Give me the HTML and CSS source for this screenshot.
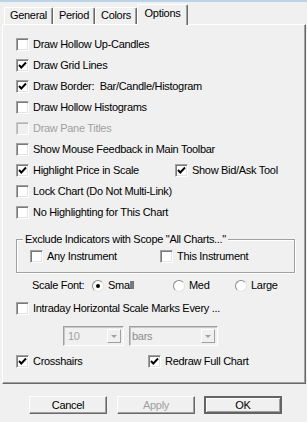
FILE: index.html
```html
<!DOCTYPE html>
<html>
<head>
    <title>Chart Options</title>
    <link rel="stylesheet" href="styles.css">
</head>
<body>
    <div class="topline"></div>
    <div class="tabs">
        <div class="tab tab-general">General</div>
        <div class="tab tab-period">Period</div>
        <div class="tab tab-colors">Colors</div>
        <div class="tab tab-options active">Options</div>
    </div>
    <div class="panel">
        <div class="row"><span class="cb"></span><span>Draw Hollow Up-Candles</span></div>
        <div class="row"><span class="cb checked"><svg viewBox="0 0 11 11"><polyline points="2,5 4.3,7.5 9,2.5"/></svg></span><span>Draw Grid Lines</span></div>
        <div class="row"><span class="cb checked"><svg viewBox="0 0 11 11"><polyline points="2,5 4.3,7.5 9,2.5"/></svg></span><span>Draw Border:&nbsp; Bar/Candle/Histogram</span></div>
        <div class="row"><span class="cb"></span><span>Draw Hollow Histograms</span></div>
        <div class="row disabled"><span class="cb"></span><span>Draw Pane Titles</span></div>
        <div class="row"><span class="cb"></span><span>Show Mouse Feedback in Main Toolbar</span></div>
        <div class="row">
            <div class="cell cell-highlight"><span class="cb checked"><svg viewBox="0 0 11 11"><polyline points="2,5 4.3,7.5 9,2.5"/></svg></span><span>Highlight Price in Scale</span></div>
            <div class="cell"><span class="cb checked"><svg viewBox="0 0 11 11"><polyline points="2,5 4.3,7.5 9,2.5"/></svg></span><span>Show Bid/Ask Tool</span></div>
        </div>
        <div class="row"><span class="cb"></span><span>Lock Chart (Do Not Multi-Link)</span></div>
        <div class="row"><span class="cb"></span><span>No Highlighting for This Chart</span></div>

        <div class="group">
            <div class="group-label">Exclude Indicators with Scope "All Charts..."</div>
            <div class="group-row">
                <div class="cell cell-any"><span class="cb"></span><span>Any Instrument</span></div>
                <div class="cell"><span class="cb"></span><span>This Instrument</span></div>
            </div>
        </div>

        <div class="scale-row">
            <span class="scale-label">Scale Font:</span>
            <div class="cell radio-small"><span class="radio selected"></span><span>Small</span></div>
            <div class="cell radio-med"><span class="radio"></span><span>Med</span></div>
            <div class="cell"><span class="radio"></span><span>Large</span></div>
        </div>

        <div class="row row-intraday"><span class="cb"></span><span>Intraday Horizontal Scale Marks Every ...</span></div>

        <div class="combo-row">
            <div class="combo combo-num"><span class="combo-text">10</span><span class="combo-btn"><span class="arrow"></span></span></div>
            <div class="combo combo-unit"><span class="combo-text">bars</span><span class="combo-btn"><span class="arrow"></span></span></div>
        </div>

        <div class="row row-cross">
            <div class="cell cell-cross"><span class="cb checked"><svg viewBox="0 0 11 11"><polyline points="2,5 4.3,7.5 9,2.5"/></svg></span><span>Crosshairs</span></div>
            <div class="cell"><span class="cb checked"><svg viewBox="0 0 11 11"><polyline points="2,5 4.3,7.5 9,2.5"/></svg></span><span>Redraw Full Chart</span></div>
        </div>
    </div>
    <div class="buttons">
        <button class="btn">Cancel</button>
        <button class="btn" disabled>Apply</button>
        <button class="btn default">OK</button>
    </div>
</body>
</html>
```
FILE: styles.css
```css
body {
    margin: 0;
    background-color: #f0f0f0;
    color: #000;
    font-family: "Liberation Sans", Arial, sans-serif;
    font-size: 11px;
    line-height: 13px;
    letter-spacing: -0.3px;
}

.topline {
    height: 2px;
    background-color: #bdd3ea;
}

/* tab strip */
.tabs {
    display: flex;
    align-items: flex-end;
    height: 22px;
    padding-left: 4px;
}
.tab {
    box-sizing: border-box;
    height: 17px;
    display: flex;
    align-items: center;
    justify-content: center;
    border-top: 1px solid #fff;
    border-left: 1px solid #fff;
    border-right: 1px solid #696969;
    box-shadow: inset -1px 0 #a0a0a0;
    border-radius: 2px 2px 0 0;
    padding-bottom: 1px;
}
.tab-general { width: 49px; }
.tab-period { width: 42px; }
.tab-colors { width: 42px; }
.tab-options { width: 51px; }
.tab.active {
    height: 21px;
    margin-bottom: -1px;
    padding-bottom: 4px;
    background-color: #f0f0f0;
    position: relative;
    z-index: 1;
}

/* main panel */
.panel {
    box-sizing: border-box;
    width: 304px;
    height: 360px;
    margin-left: 2px;
    padding-top: 9px;
    border: 1px solid;
    border-color: #fff #696969 #696969 #fff;
    box-shadow: inset -1px -1px #a0a0a0;
}

.row {
    display: flex;
    align-items: center;
    height: 21px;
    padding-left: 13px;
}
.cell {
    display: flex;
    align-items: center;
}
.cell-highlight { width: 159px; }
.cell-cross { width: 132px; }
.disabled { color: #a0a0a0; }

.cb {
    box-sizing: border-box;
    flex: none;
    width: 13px;
    height: 13px;
    margin-right: 4px;
    background-color: #fff;
    border: 1px solid;
    border-color: #a0a0a0 #fff #fff #a0a0a0;
    box-shadow: inset 1px 1px #7a7a7a, inset -1px -1px #e3e3e3;
    display: flex;
}
.cb svg {
    width: 11px;
    height: 11px;
}
.cb polyline {
    fill: none;
    stroke: #000;
    stroke-width: 1.9;
}
.disabled .cb {
    background-color: #f0f0f0;
    border-color: #c8c8c8 #fff #fff #c8c8c8;
    box-shadow: inset 1px 1px #b4b4b4;
}

/* group box */
.group {
    box-sizing: border-box;
    width: 279px;
    margin: 16px 0 0 13px;
    padding: 0 0 8px 13px;
    border: 1px solid #a0a0a0;
    box-shadow: inset 1px 1px #fff, 1px 1px #fff;
}
.group-label {
    display: table;
    margin: -7px 0 0 -7px;
    padding: 0 2px;
    background-color: #f0f0f0;
}
.group-row {
    display: flex;
    align-items: center;
    height: 15px;
    margin-top: 3px;
}
.cell-any { width: 130px; }

/* scale font radios */
.scale-row {
    display: flex;
    align-items: center;
    height: 21px;
    margin-top: 2px;
    padding-left: 29px;
}
.scale-label { width: 60px; }
.radio-small { width: 81px; }
.radio-med { width: 62px; }
.radio {
    box-sizing: border-box;
    flex: none;
    width: 12px;
    height: 12px;
    margin-right: 4px;
    border-radius: 50%;
    background-color: #fff;
    border: 1px solid;
    border-color: #8a8a8a #e3e3e3 #e3e3e3 #8a8a8a;
    display: flex;
    align-items: center;
    justify-content: center;
}
.radio.selected::after {
    content: "";
    width: 4px;
    height: 4px;
    border-radius: 50%;
    background-color: #000;
}

.row-intraday { margin-top: 2px; }

/* disabled combos */
.combo-row {
    display: flex;
    gap: 5px;
    margin-top: 7px;
    padding-left: 60px;
}
.combo {
    box-sizing: border-box;
    height: 20px;
    display: flex;
    align-items: center;
    justify-content: space-between;
    border: 1px solid;
    border-color: #a0a0a0 #fff #fff #a0a0a0;
    box-shadow: inset 1px 1px #c8c8c8;
    color: #a0a0a0;
    padding: 0 2px 0 4px;
}
.combo-num { width: 61px; }
.combo-unit { width: 89px; padding-left: 2px; }
.combo-unit .combo-text {
    color: #8c8c8c;
}
.combo-btn {
    box-sizing: border-box;
    width: 14px;
    height: 14px;
    border: 1px solid;
    border-color: #fff #a0a0a0 #a0a0a0 #fff;
    display: flex;
    align-items: center;
    justify-content: center;
}
.arrow {
    width: 0;
    height: 0;
    border-left: 3px solid transparent;
    border-right: 3px solid transparent;
    border-top: 3px solid #a0a0a0;
}

.row-cross { margin-top: 5px; }

/* dialog buttons */
.buttons {
    display: flex;
    gap: 10px;
    margin-top: 12px;
    padding-left: 29px;
}
.btn {
    box-sizing: border-box;
    width: 78px;
    height: 18px;
    padding: 0;
    font-family: "Liberation Sans", Arial, sans-serif;
    font-size: 11px;
    letter-spacing: -0.3px;
    color: #000;
    background-color: #f0f0f0;
    border: 1px solid;
    border-color: #fff #696969 #696969 #fff;
    box-shadow: inset -1px -1px #a0a0a0;
}
.btn:disabled { color: #a0a0a0; }
.btn.default {
    margin-left: -1px;
    border: 2px solid #646464;
    box-shadow: inset 1px 1px #fff, inset -1px -1px #a0a0a0;
}
```
